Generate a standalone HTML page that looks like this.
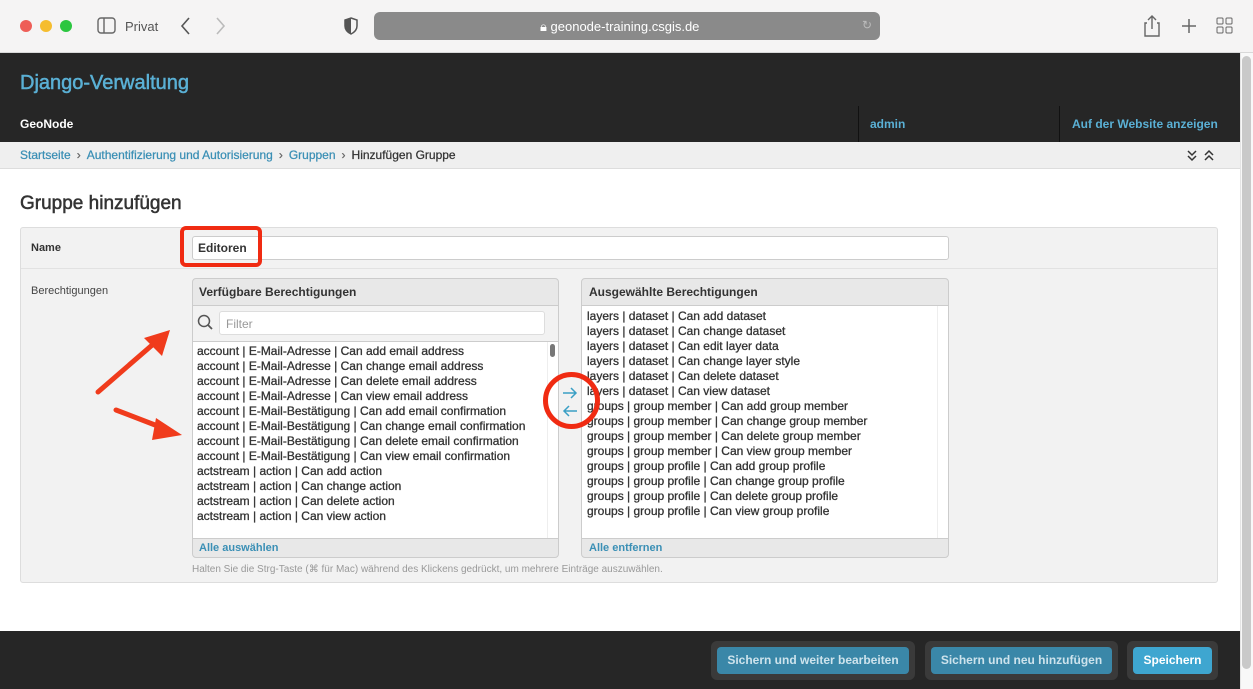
<!DOCTYPE html>
<html><head><meta charset="utf-8"><style>
*{box-sizing:border-box;margin:0;padding:0}
body{width:1253px;height:689px;overflow:hidden;font-family:"Liberation Sans",Arial,sans-serif;background:#fff;position:relative;color:#333}
.a{position:absolute}
.top{left:0;top:0;width:1253px;height:53px;background:#f5f4f4;border-bottom:1px solid #d8d8d8}
.dot{width:12px;height:12px;border-radius:50%;top:20px}
.hdr{left:0;top:53px;width:1240px;height:89px;background:#262626}
.bc{left:0;top:142px;width:1240px;height:27px;background:#efefef;border-bottom:1px solid #ddd;font-size:12px;color:#333;padding:6px 20px;line-height:14px;-webkit-text-stroke:0.25px}
.bc span.l{color:#3a8fb5}
.bc .s{color:#666;margin:0 6px}
.sb{left:1240px;top:53px;width:13px;height:636px;background:#f8f8f8;border-left:1px solid #e4e4e4}
.list div{font-size:12px;line-height:15px;white-space:nowrap;color:#333;-webkit-text-stroke:0.3px}
.btn{top:641px;height:39px;border-radius:6px;background:#3a3a3a;padding:6px}
.btn div{height:27px;border-radius:4px;background:#3a87a8;color:#cde3ec;font-size:12px;font-weight:bold;line-height:27px;text-align:center}
</style></head><body>
<div class="a top"></div>
<div class="a dot" style="left:20px;background:#ee5e57"></div>
<div class="a dot" style="left:40px;background:#f5bd2f"></div>
<div class="a dot" style="left:60px;background:#2bc640"></div>
<svg class="a" style="left:97px;top:17px" width="20" height="18"><rect x="1" y="1" width="17" height="15" rx="3" fill="none" stroke="#666" stroke-width="1.4"/><line x1="7" y1="1" x2="7" y2="16" stroke="#666" stroke-width="1.4"/></svg>
<div class="a" style="left:125px;top:19px;font-size:13px;color:#555">Privat</div>
<svg class="a" style="left:178px;top:16px" width="50" height="20"><path d="M11 2 L4 10 L11 18" fill="none" stroke="#555" stroke-width="1.6"/><path d="M39 2 L46 10 L39 18" fill="none" stroke="#bbb" stroke-width="1.6"/></svg>
<svg class="a" style="left:343px;top:17px" width="16" height="18"><path d="M8 1 L14 3 V9 Q14 14 8 17 Q2 14 2 9 V3 Z" fill="none" stroke="#555" stroke-width="1.5"/><path d="M8 1 L2 3 V9 Q2 14 8 17Z" fill="#555"/></svg>
<div class="a" style="left:374px;top:12px;width:506px;height:28px;border-radius:6px;background:#8a8a8a"></div>
<div class="a" style="left:540px;top:19px;font-size:13px;color:#fff">🔒︎ geonode-training.csgis.de</div>
<div class="a" style="left:862px;top:18px;font-size:12px;color:#bbb">↻</div>
<svg class="a" style="left:1143px;top:14px" width="100" height="24"><path d="M4 9 H2 V22 H16 V9 H14 M9 15 V2 M5 6 L9 2 L13 6" fill="none" stroke="#666" stroke-width="1.4"/><path d="M46 5 V19 M39 12 H53" stroke="#666" stroke-width="1.5"/><rect x="74" y="4" width="6" height="6" rx="1" fill="none" stroke="#666"/><rect x="83" y="4" width="6" height="6" rx="1" fill="none" stroke="#666"/><rect x="74" y="13" width="6" height="6" rx="1" fill="none" stroke="#666"/><rect x="83" y="13" width="6" height="6" rx="1" fill="none" stroke="#666"/></svg>

<div class="a hdr"></div>
<div class="a" style="left:20px;top:72px;font-size:20px;color:#5ab0d5;-webkit-text-stroke:0.5px">Django-Verwaltung</div>
<div class="a" style="left:20px;top:117px;font-size:12px;color:#fff;font-weight:bold">GeoNode</div>
<div class="a" style="left:858px;top:106px;width:1px;height:36px;background:#111"></div>
<div class="a" style="left:1059px;top:106px;width:1px;height:36px;background:#111"></div>
<div class="a" style="left:870px;top:117px;font-size:12px;color:#5ab0d5;font-weight:bold">admin</div>
<div class="a" style="left:1072px;top:117px;font-size:12px;color:#5ab0d5;font-weight:bold">Auf der Website anzeigen</div>
<div class="a bc"><span class="l">Startseite</span><span class="s">›</span><span class="l">Authentifizierung und Autorisierung</span><span class="s">›</span><span class="l">Gruppen</span><span class="s">›</span>Hinzufügen Gruppe</div>
<svg class="a" style="left:1187px;top:149px" width="32" height="14"><path d="M1 2 L5 6 L9 2 M1 7 L5 11 L9 7" fill="none" stroke="#333" stroke-width="1.5"/><path d="M18 6 L22 2 L26 6 M18 11 L22 7 L26 11" fill="none" stroke="#333" stroke-width="1.5"/></svg>
<div class="a sb"></div>
<div class="a" style="left:1242px;top:56px;width:9px;height:613px;border-radius:5px;background:#c9c9c9"></div>

<div class="a" style="left:20px;top:193px;font-size:19px;color:#333;-webkit-text-stroke:0.5px">Gruppe hinzufügen</div>
<div class="a" style="left:20px;top:227px;width:1198px;height:356px;background:#f2f2f2;border:1px solid #ddd;border-radius:3px"></div>
<div class="a" style="left:21px;top:268px;width:1196px;height:1px;background:#e2e2e2"></div>
<div class="a" style="left:31px;top:242px;font-size:11px;font-weight:bold">Name</div>
<div class="a" style="left:192px;top:236px;width:757px;height:24px;background:#fff;border:1px solid #ccc;border-radius:3px"></div>
<div class="a" style="left:198px;top:241px;font-size:12px;font-weight:bold;color:#333">Editoren</div>
<div class="a" style="left:180px;top:226px;width:82px;height:41px;border:4px solid #f02b12;border-radius:6px"></div>
<div class="a" style="left:31px;top:285px;font-size:11px;color:#444">Berechtigungen</div>

<!-- left box -->
<div class="a" style="left:192px;top:278px;width:367px;height:280px;border:1px solid #ccc;border-radius:4px;background:#e8e8e8"></div>
<div class="a" style="left:199px;top:285px;font-size:12px;font-weight:bold">Verfügbare Berechtigungen</div>
<div class="a" style="left:193px;top:305px;width:365px;height:1px;background:#ccc"></div>
<div class="a" style="left:193px;top:306px;width:365px;height:35px;background:#f2f2f2"></div>
<svg class="a" style="left:197px;top:314px" width="18" height="18"><circle cx="7" cy="7" r="5.5" fill="none" stroke="#555" stroke-width="1.5"/><path d="M11 11 L15 15" stroke="#555" stroke-width="1.8"/></svg>
<div class="a" style="left:219px;top:311px;width:326px;height:24px;background:#fff;border:1px solid #ddd;border-radius:3px;font-size:12px;color:#999;padding:5px 6px">Filter</div>
<div class="a" style="left:193px;top:341px;width:365px;height:198px;background:#fff;border-top:1px solid #ccc;border-bottom:1px solid #ccc"></div>
<div class="a" style="left:547px;top:342px;width:1px;height:196px;background:#eee"></div>
<div class="a" style="left:550px;top:344px;width:5px;height:13px;border-radius:3px;background:#777"></div>
<div class="a list" style="left:197px;top:344px;width:350px;overflow:hidden">
<div>account | E-Mail-Adresse | Can add email address</div>
<div>account | E-Mail-Adresse | Can change email address</div>
<div>account | E-Mail-Adresse | Can delete email address</div>
<div>account | E-Mail-Adresse | Can view email address</div>
<div>account | E-Mail-Bestätigung | Can add email confirmation</div>
<div>account | E-Mail-Bestätigung | Can change email confirmation</div>
<div>account | E-Mail-Bestätigung | Can delete email confirmation</div>
<div>account | E-Mail-Bestätigung | Can view email confirmation</div>
<div>actstream | action | Can add action</div>
<div>actstream | action | Can change action</div>
<div>actstream | action | Can delete action</div>
<div>actstream | action | Can view action</div>
</div>
<div class="a" style="left:199px;top:542px;font-size:11px;font-weight:bold;color:#3a8fb5">Alle auswählen</div>

<!-- right box -->
<div class="a" style="left:581px;top:278px;width:368px;height:280px;border:1px solid #ccc;border-radius:4px;background:#e8e8e8"></div>
<div class="a" style="left:589px;top:285px;font-size:12px;font-weight:bold">Ausgewählte Berechtigungen</div>
<div class="a" style="left:582px;top:305px;width:366px;height:234px;background:#fff;border-top:1px solid #ccc;border-bottom:1px solid #ccc"></div>
<div class="a" style="left:937px;top:306px;width:1px;height:232px;background:#eee"></div>
<div class="a list" style="left:587px;top:309px">
<div>layers | dataset | Can add dataset</div>
<div>layers | dataset | Can change dataset</div>
<div>layers | dataset | Can edit layer data</div>
<div>layers | dataset | Can change layer style</div>
<div>layers | dataset | Can delete dataset</div>
<div>layers | dataset | Can view dataset</div>
<div>groups | group member | Can add group member</div>
<div>groups | group member | Can change group member</div>
<div>groups | group member | Can delete group member</div>
<div>groups | group member | Can view group member</div>
<div>groups | group profile | Can add group profile</div>
<div>groups | group profile | Can change group profile</div>
<div>groups | group profile | Can delete group profile</div>
<div>groups | group profile | Can view group profile</div>
</div>
<!-- arrows -->
<svg class="a" style="left:561px;top:385px" width="18" height="34"><path d="M2 8 H15 M10 3 L15 8 L10 13" fill="none" stroke="#3a9fc5" stroke-width="1.5"/><path d="M16 26 H3 M8 21 L3 26 L8 31" fill="none" stroke="#3a9fc5" stroke-width="1.5"/></svg>
<div class="a" style="left:543px;top:372px;width:57px;height:57px;border:5px solid #f02b12;border-radius:50%"></div>
<div class="a" style="left:589px;top:542px;font-size:11px;font-weight:bold;color:#3a8fb5">Alle entfernen</div>
<div class="a" style="left:192px;top:564px;font-size:10px;color:#999">Halten Sie die Strg-Taste (⌘ für Mac) während des Klickens gedrückt, um mehrere Einträge auszuwählen.</div>

<!-- red arrows -->
<svg class="a" style="left:88px;top:322px" width="100" height="120"><path d="M10 70 L70 18" stroke="#f03b1c" stroke-width="5" stroke-linecap="round"/><path d="M82 8 L56 16 L74 34 Z" fill="#f03b1c"/><path d="M28 88 L80 108" stroke="#f03b1c" stroke-width="5" stroke-linecap="round"/><path d="M94 113 L68 96 L64 118 Z" fill="#f03b1c"/></svg>

<!-- footer -->
<div class="a" style="left:0;top:631px;width:1240px;height:58px;background:#262626"></div>
<div class="a btn" style="left:711px;width:204px"><div>Sichern und weiter bearbeiten</div></div>
<div class="a btn" style="left:925px;width:193px"><div>Sichern und neu hinzufügen</div></div>
<div class="a btn" style="left:1127px;width:91px"><div style="background:#3ea6d0;color:#fff">Speichern</div></div>
</body></html>
